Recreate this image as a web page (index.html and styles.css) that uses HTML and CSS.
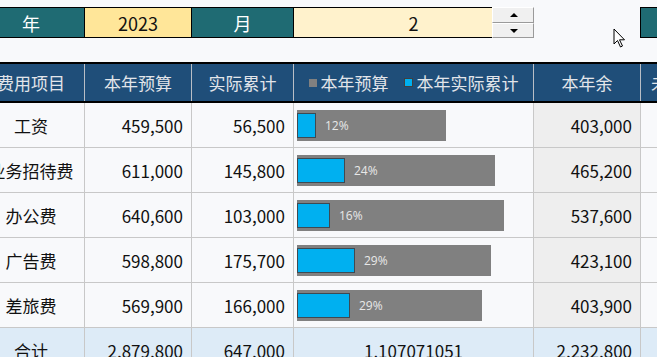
FILE: index.html
```html
<!DOCTYPE html>
<html lang="zh-CN">
<head>
    <meta charset="UTF-8">
    <title>费用预算</title>
    <link rel="stylesheet" href="styles.css">
</head>
<body>
<div class="sheet">
    <!-- 年月选择 -->
    <div class="topbar">
        <div class="picker">
            <div class="cell label">年</div>
            <div class="cell year">2023</div>
            <div class="cell label">月</div>
            <div class="cell month">2
                <div class="spinner">
                    <span class="spin up"></span>
                    <span class="spin down"></span>
                </div>
            </div>
        </div>
        <div class="side-cell"></div>
    </div>

    <!-- 表头 -->
    <div class="row head">
        <div class="c">费用项目</div>
        <div class="c">本年预算</div>
        <div class="c">实际累计</div>
        <div class="c legend">
            <span class="key gray"></span>本年预算
            <span class="key blue"></span>本年实际累计
        </div>
        <div class="c">本年余</div>
        <div class="c clip">未用比例</div>
    </div>

    <div class="row">
        <div class="c name">工资</div>
        <div class="c num">459,500</div>
        <div class="c num">56,500</div>
        <div class="c chart"><div class="bar" style="width:149px"><div class="fill" style="width:19px"></div><span class="pct">12%</span></div></div>
        <div class="c num rest">403,000</div>
        <div class="c"></div>
    </div>
    <div class="row">
        <div class="c name">业务招待费</div>
        <div class="c num">611,000</div>
        <div class="c num">145,800</div>
        <div class="c chart"><div class="bar" style="width:198px"><div class="fill" style="width:48px"></div><span class="pct">24%</span></div></div>
        <div class="c num rest">465,200</div>
        <div class="c"></div>
    </div>
    <div class="row">
        <div class="c name">办公费</div>
        <div class="c num">640,600</div>
        <div class="c num">103,000</div>
        <div class="c chart"><div class="bar" style="width:207px"><div class="fill" style="width:33px"></div><span class="pct">16%</span></div></div>
        <div class="c num rest">537,600</div>
        <div class="c"></div>
    </div>
    <div class="row">
        <div class="c name">广告费</div>
        <div class="c num">598,800</div>
        <div class="c num">175,700</div>
        <div class="c chart"><div class="bar" style="width:194px"><div class="fill" style="width:58px"></div><span class="pct">29%</span></div></div>
        <div class="c num rest">423,100</div>
        <div class="c"></div>
    </div>
    <div class="row">
        <div class="c name">差旅费</div>
        <div class="c num">569,900</div>
        <div class="c num">166,000</div>
        <div class="c chart"><div class="bar" style="width:185px"><div class="fill" style="width:53px"></div><span class="pct">29%</span></div></div>
        <div class="c num rest">403,900</div>
        <div class="c"></div>
    </div>
    <div class="row total">
        <div class="c name">合计</div>
        <div class="c num">2,879,800</div>
        <div class="c num">647,000</div>
        <div class="c mid">1.107071051</div>
        <div class="c num">2,232,800</div>
        <div class="c"></div>
    </div>
</div>

<!-- 鼠标指针 -->
<svg class="cursor" width="14" height="21" viewBox="0 0 14 21">
    <path d="M1 1 L1 16 L4.5 12.5 L7.5 19 L9.5 18 L6.5 11.8 L11.5 11.8 Z" fill="#fff" stroke="#000" stroke-width="1" stroke-linejoin="round"/>
</svg>
</body>
</html>
```

FILE: styles.css
```css
body {
    margin: 0;
    background-color: #f8f9fb;
    font-family: "Noto Sans CJK SC", "Noto Sans", sans-serif;
    color: #111;
    overflow: hidden;
}

.sheet {
    margin-left: -22px;
    width: 700px;
}

/* Top picker */
.topbar {
    display: flex;
    margin-top: 7px;
    height: 31px;
}
.picker {
    display: grid;
    grid-template-columns: 107px 107px 102px 240px;
    border-top: 1px solid #000;
    border-bottom: 1px solid #000;
}
.picker .cell {
    display: flex;
    align-items: center;
    justify-content: center;
    border-right: 1px solid #000;
    font-size: 18px;
    position: relative;
}
.picker .label {
    background-color: #1f6b73;
    color: #fff;
}
.picker .year {
    background-color: #ffe699;
}
.picker .month {
    background-color: #fff2cc;
}
.spinner {
    position: absolute;
    top: -1px;
    right: -1px;
    width: 42px;
    height: 31px;
    display: flex;
    flex-direction: column;
}
.spin {
    flex: 1;
    background-color: #f0f0f0;
    border: 1px solid #9a9a9a;
    border-top-color: #fff;
    border-left-color: #fff;
    position: relative;
}
.spin::after {
    content: "";
    position: absolute;
    left: 17px;
    top: 5px;
    border-left: 4px solid transparent;
    border-right: 4px solid transparent;
}
.spin.up::after {
    border-bottom: 4px solid #000;
}
.spin.down::after {
    border-top: 4px solid #000;
}
.side-cell {
    margin-left: 106px;
    width: 40px;
    background-color: #1f6b73;
    border: 1px solid #000;
}

/* Table */
.row {
    display: grid;
    grid-template-columns: 107px 107px 102px 240px 107px 37px;
    height: 45px;
    box-sizing: border-box;
    border-bottom: 1px solid #c8c8c8;
}
.row .c {
    display: flex;
    align-items: center;
    border-right: 1px solid #c8c8c8;
    font-size: 17px;
    white-space: nowrap;
    overflow: hidden;
}
.head {
    margin-top: 24px;
    height: 41px;
    background-color: #1f4e79;
    border-top: 2px solid #000;
    border-bottom: 2px solid #000;
}
.head .c {
    justify-content: center;
    color: #e2e5ea;
    border-right-color: #b9bec6;
}
.head .clip {
    justify-content: flex-start;
    padding-left: 10px;
}
.legend .key {
    width: 8px;
    height: 8px;
    margin-right: 4px;
}
.legend .key.gray {
    background-color: #808080;
}
.legend .key.blue {
    background-color: #00b0f0;
    border: 1px solid #404040;
    width: 7px;
    height: 7px;
    margin-left: 15px;
}
.name {
    justify-content: center;
}
.num {
    justify-content: flex-end;
    padding-right: 8px;
}
.mid {
    justify-content: center;
}
.rest {
    background-color: #eeeeee;
}
.total {
    background-color: #ddebf7;
}

/* Bars */
.chart {
    padding-left: 3px;
}
.bar {
    height: 31px;
    background-color: #808080;
    display: flex;
    align-items: center;
}
.fill {
    height: 25px;
    box-sizing: border-box;
    background-color: #00b0f0;
    border: 1px solid #3e4a52;
}
.pct {
    margin-left: 9px;
    font-family: "Open Sans", "Noto Sans", sans-serif;
    font-size: 12px;
    color: #e8e8e8;
}

.cursor {
    position: absolute;
    left: 613px;
    top: 28px;
}
```
